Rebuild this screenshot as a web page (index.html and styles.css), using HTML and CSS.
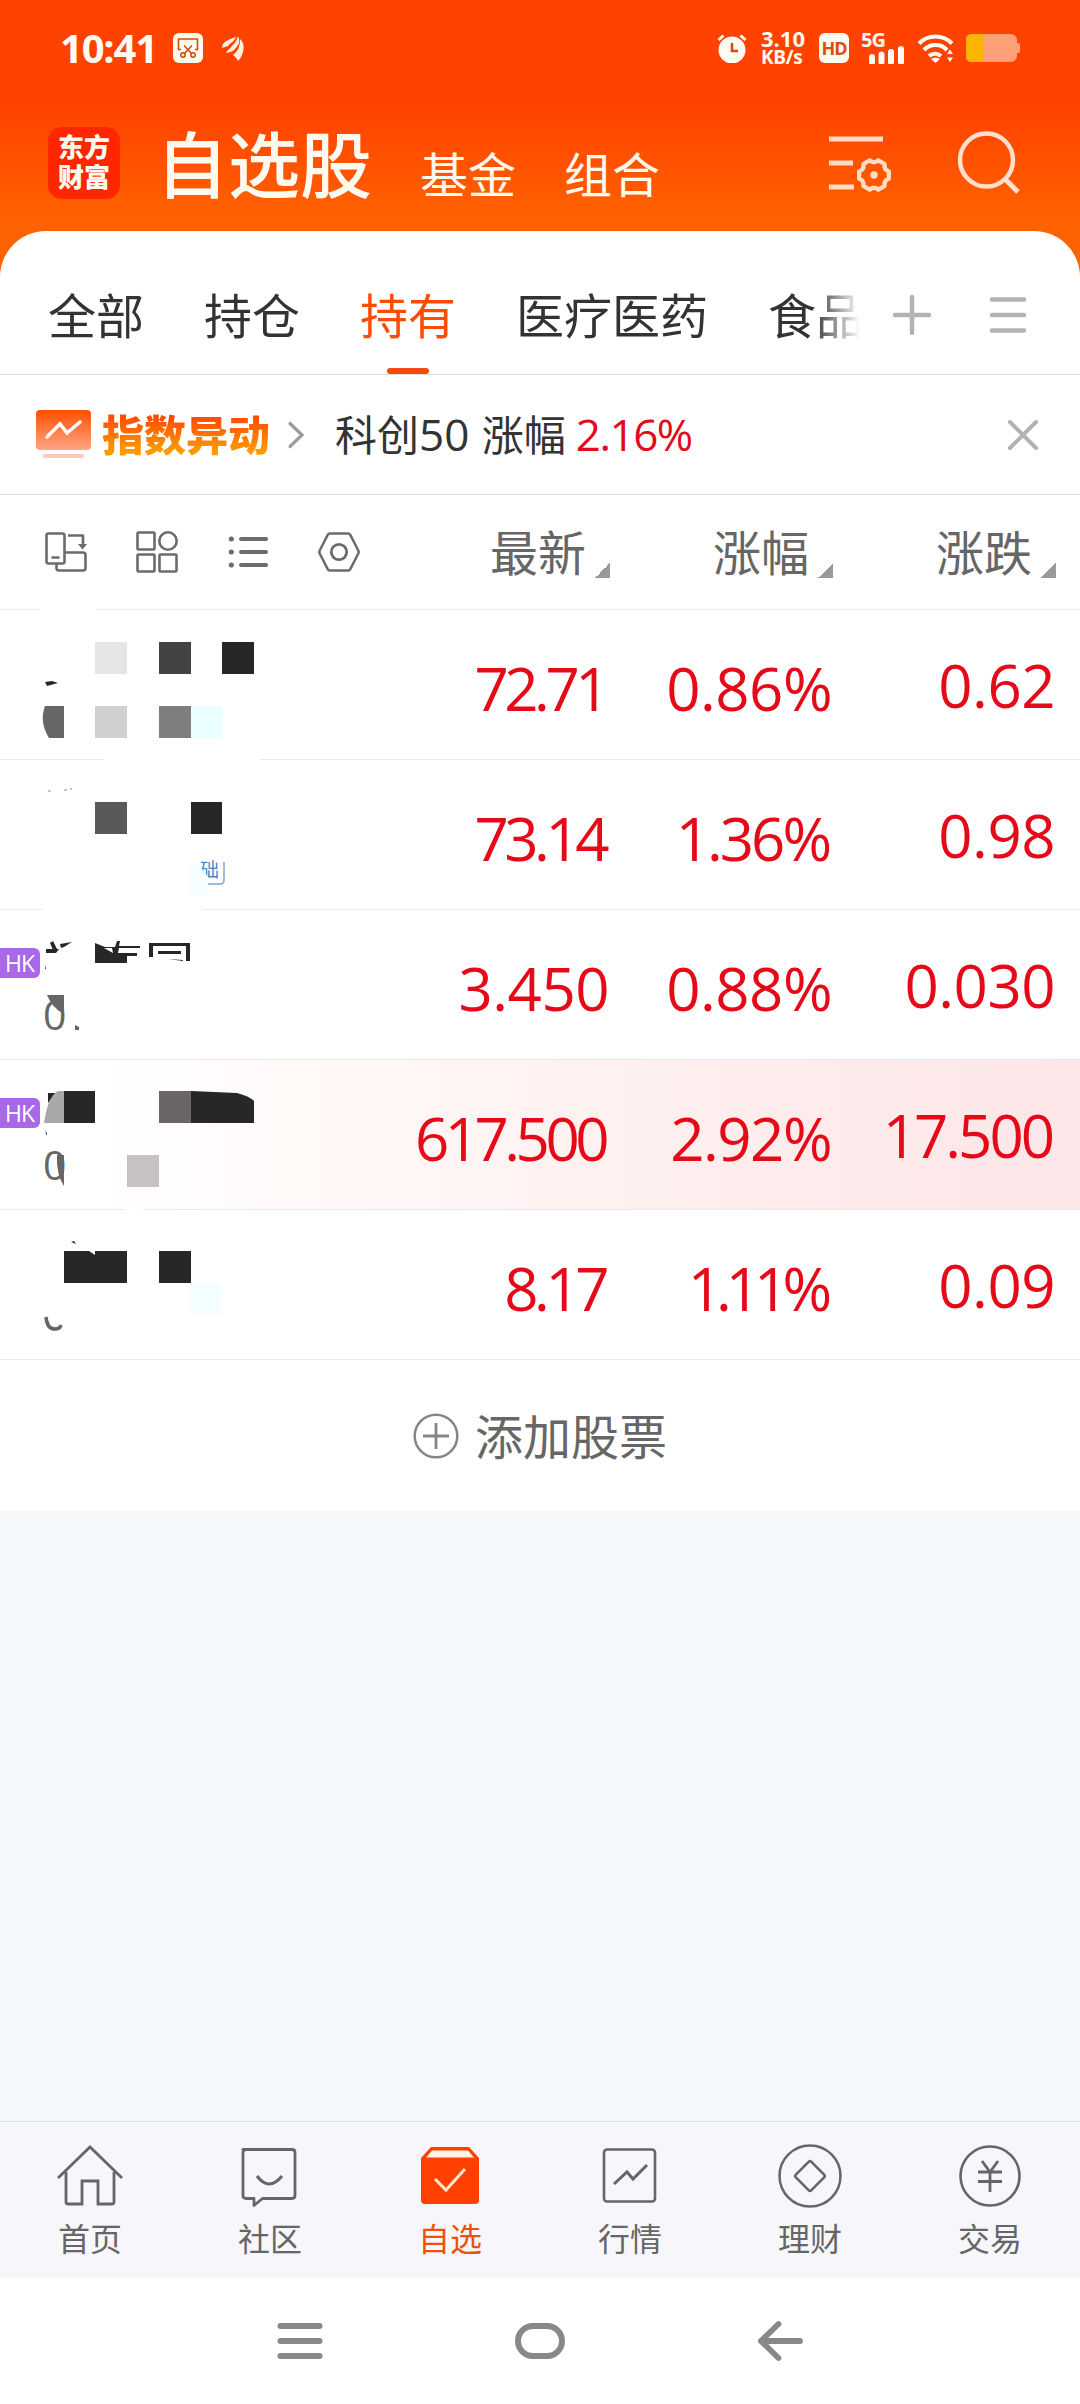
FILE: index.html
```html
<!DOCTYPE html>
<html lang="zh-CN">
<head>
    <meta charset="UTF-8">
    <meta name="viewport" content="width=device-width, initial-scale=1.0">
    <title>自选股</title>
    <link rel="stylesheet" href="styles.css">
</head>
<body>
    <div class="top">
        <div class="status">
            <span class="clock">10:41</span>
            <svg class="shot" width="30" height="30" viewBox="0 0 30 30">
                <rect width="30" height="30" rx="6" fill="#fff8ee"/>
                <path d="M8 16.500H5.500V6h19v10.500H22M11 12.500l8 8.500M19 12.500L11 21" fill="none" stroke="#c8500a" stroke-width="1.600"/>
                <circle cx="10" cy="22" r="2.200" fill="none" stroke="#c8500a" stroke-width="1.500"/>
                <circle cx="20" cy="22" r="2.200" fill="none" stroke="#c8500a" stroke-width="1.500"/>
            </svg>
            <svg width="24" height="28" viewBox="0 0 24 28">
                <g fill="#ffeedd">
                    <path d="M1 14C1 8 6 6 15 3c-2 5-6 6-8 9-2 1-4 1-6 2z"/>
                    <path d="M5 19c1-3 4-4 6-7 3-3 5-6 6-10 3 6 0 10-4 14-2 2-5 2-8 3z"/>
                    <path d="M12 21c4-3 7-7 7-16 5 4 4 11 2 16-1 3-3 5-4 6-1-3-3-4-5-6z"/>
                </g>
            </svg>
            <div class="status-right">
                <svg width="32" height="30" viewBox="0 0 32 30">
                    <circle cx="15" cy="17" r="13.500" fill="#fffaf2"/>
                    <path d="M1.500 7l5-4.500M28.500 7l-5-4.500" stroke="#fffaf2" stroke-width="3"/>
                    <path d="M15 10v8h6" fill="none" stroke="#d9480a" stroke-width="2.500"/>
                </svg>
                <div class="speed"><span>3.10</span><span>KB/s</span></div>
                <div class="hd">HD</div>
                <div class="signal">
                    <span>5G</span>
                    <svg width="36" height="18" viewBox="0 0 36 18">
                        <path d="M3 11v5M12.500 8.500V16M22 6v10M32 3v13" stroke="#fffaf2" stroke-width="6" stroke-linecap="round"/>
                    </svg>
                </div>
                <svg width="37" height="30" viewBox="0 0 37 30">
                    <path d="M2 10.500a23 23 0 0 1 33 0M7 17a16 16 0 0 1 23 0M12 23a9 9 0 0 1 12 0" fill="none" stroke="#fffaf2" stroke-width="4"/>
                    <path d="M14 26q4.500-3 9 0l-4.500 4zM30 21l3-4.500 3 4.500zM30 24.500h6L33 29z" fill="#fffaf2"/>
                </svg>
                <svg width="54" height="28" viewBox="0 0 54 28">
                    <rect width="51" height="28" rx="6" fill="#ffa076"/>
                    <path d="M51 9q3 0 3 2v6q0 2-3 2z" fill="#ffa076"/>
                    <path d="M18 0v28H6q-6 0-6-6V6q0-6 6-6z" fill="#fcb400"/>
                </svg>
            </div>
        </div>

        <div class="title-bar">
            <div class="logo">东方<br>财富</div>
            <h1>自选股</h1>
            <span class="sub">基金</span>
            <span class="sub">组合</span>
            <svg class="manage" width="66" height="64" viewBox="0 0 66 64">
                <path d="M1 9h54M1 33h24M1 57h25" stroke="#ffdcc4" stroke-width="5"/>
                <path d="M60.800 41.300V48.700Q55.500 50.500 56.600 56L50.200 59.700Q46 56 41.800 59.700L35.400 56Q36.500 50.500 31.200 48.700V41.300Q36.500 39.500 35.400 34L41.800 30.300Q46 34 50.200 30.300L56.600 34Q55.500 39.500 60.800 41.300z" fill="none" stroke="#ffdcc4" stroke-width="4.300" stroke-linejoin="round"/>
                <circle cx="46" cy="45" r="3.700" fill="#ffdcc4"/>
            </svg>
            <svg class="search" width="64" height="66" viewBox="0 0 64 66">
                <circle cx="30.500" cy="31" r="26.500" fill="none" stroke="#ffe0cc" stroke-width="4.500"/>
                <path d="M49 50l13 13" stroke="#ffe0cc" stroke-width="5"/>
            </svg>
        </div>

        <div class="tabs">
            <div class="tab-list">
                <span>全部</span>
                <span>持仓</span>
                <span class="active">持有</span>
                <span>医疗医药</span>
                <span>食品</span>
            </div>
            <svg class="add" width="40" height="40" viewBox="0 0 40 40">
                <path d="M3 20h34M20 2v36" stroke="#b2b2b2" stroke-width="4.500" stroke-linecap="round"/>
            </svg>
            <svg class="menu" width="38" height="40" viewBox="0 0 38 40">
                <path d="M3 4.500h32M3 20h32M3 35.500h32" stroke="#b2b2b2" stroke-width="4.500" stroke-linecap="round"/>
            </svg>
        </div>
    </div>

    <div class="notice">
        <svg class="notice-icon" width="55" height="50" viewBox="0 0 55 50">
            <defs>
                <linearGradient id="card" x1="0" y1="0" x2="0" y2="1">
                    <stop offset="0" stop-color="#ff4e00"/>
                    <stop offset="1" stop-color="#ffa585"/>
                </linearGradient>
            </defs>
            <rect width="55" height="40" rx="4" fill="url(#card)"/>
            <path d="M11 27l13-13 7 9 13-11" fill="none" stroke="#fff" stroke-width="3.500" stroke-linecap="round"/>
            <path d="M9 46h37" stroke="#fcc8ba" stroke-width="4" stroke-linecap="round"/>
        </svg>
        <b>指数异动</b>
        <svg class="chevron" width="18" height="30" viewBox="0 0 18 30">
            <path d="M3 3.500L15 15 3 26.500" fill="none" stroke="#9b9b9b" stroke-width="3.200" stroke-linecap="round"/>
        </svg>
        <span class="notice-text">科创<em>50</em> 涨幅</span>
        <span class="notice-rate">2.16%</span>
        <svg class="close" width="32" height="32" viewBox="0 0 32 32">
            <path d="M3 3l26 26M29 3L3 29" stroke="#b2b2b2" stroke-width="4" stroke-linecap="round"/>
        </svg>
    </div>

    <div class="row head">
        <div class="tools">
            <svg width="42" height="42" viewBox="0 0 42 42">
                <g fill="none" stroke="#6b6b6b" stroke-width="2.600" stroke-linejoin="round">
                    <rect x="1.500" y="2.500" width="18" height="30" rx="2"/>
                    <path d="M11.500 33v4q0 2.500 2.500 2.500h24q2.500 0 2.500-2.500V24q0-2.500-2.500-2.500H20M6.500 26.500h8M23 4.500h15v9"/>
                </g>
                <path d="M33 13h9l-4.500 5.500z" fill="#6b6b6b"/>
            </svg>
            <svg width="42" height="42" viewBox="0 0 42 42">
                <g fill="none" stroke="#6b6b6b" stroke-width="2.600">
                    <rect x="1.500" y="1.500" width="17" height="17" rx="1"/>
                    <circle cx="32" cy="10" r="8.700"/>
                    <rect x="1.500" y="23.500" width="17" height="17" rx="1"/>
                    <rect x="23.500" y="23.500" width="17" height="17" rx="1"/>
                </g>
            </svg>
            <svg width="42" height="42" viewBox="0 0 42 42">
                <path d="M14 8h25M14 21h25M14 34h25" stroke="#6b6b6b" stroke-width="4" stroke-linecap="round"/>
                <path d="M4.300 8h.1M4.300 21h.1M4.300 34h.1" stroke="#6b6b6b" stroke-width="5" stroke-linecap="round"/>
            </svg>
            <svg width="42" height="42" viewBox="0 0 42 42">
                <path d="M12 2.500h18q1.500 0 2.300 1.400l8 15.600q.8 1.500 0 3l-8 15.600q-.8 1.400-2.300 1.400H12q-1.500 0-2.300-1.400l-8-15.600q-.8-1.500 0-3l8-15.600Q10.500 2.500 12 2.500z" fill="none" stroke="#6b6b6b" stroke-width="2.500"/>
                <circle cx="21" cy="21" r="7.700" fill="none" stroke="#6b6b6b" stroke-width="2.800"/>
            </svg>
        </div>
        <div class="col">最新<i></i></div>
        <div class="col">涨幅<i></i></div>
        <div class="col">涨跌<i></i></div>
    </div>

    <div class="row">
        <svg class="name" width="300" height="150" viewBox="0 0 300 150">
            <path d="M40-1h56v3H40zM104 148h156v4H104z" fill="#fff"/>
            <path d="M95 32h32v32H95z" fill="#e5e5e5"/>
            <path d="M159 32h32v32h-32z" fill="#434343"/>
            <path d="M222 32h32v32h-32z" fill="#272727"/>
            <path d="M45 72l7-1 6 2-11 3z" fill="#272727"/>
            <path d="M45 96h19v32H49q-10-16-4-32z" fill="#666"/>
            <path d="M95 96h32v32H95z" fill="#d0d0d0"/>
            <path d="M159 96h32v32h-32z" fill="#7e7e7e"/>
            <path d="M191 96h31v32h-31z" fill="#eaffff"/>
        </svg>
        <div class="num tight-4">72.71</div>
        <div class="num">0.86%</div>
        <div class="num">0.62</div>
    </div>

    <div class="row">
        <svg class="name" width="300" height="150" viewBox="0 0 300 150">
            <defs>
                <clipPath id="chip"><path d="M197 98h30v29h-19v-10l-11-15z"/></clipPath>
            </defs>
            <path d="M43 148h160v4H43z" fill="#fff"/>
            <path d="M48 31h3M64 30h3M70 29h2" stroke="#888"/>
            <path d="M95 42h32v32H95z" fill="#595959"/>
            <path d="M191 42h31v32h-31z" fill="#272727"/>
            <path d="M191 104h17v32h-17z" fill="#f5feff"/>
            <g clip-path="url(#chip)">
                <text x="200" y="117" class="chip-text">础</text>
            </g>
            <path d="M208 124h12q4 0 4-4v-18" fill="none" stroke="#7aa9cf" stroke-width="1.500"/>
        </svg>
        <div class="num tight-4">73.14</div>
        <div class="num tight-2">1.36%</div>
        <div class="num">0.98</div>
    </div>

    <div class="row">
        <svg class="name" width="300" height="150" viewBox="0 0 300 150">
            <g fill="#272727">
                <path d="M50 33l3-2 4 8-4 1zM60 34l12-2-8 5-3 1zM46 39h13l-3 4H46zM45 59l1-4v4z"/>
                <path d="M95 33l10 4h10l2-6h3l-1 5h21v2h-21l-1 5h19v3h-10v7H95z"/>
                <path d="M149 33h41v18h-4V36h-33v11h-4zM158 41h23v3h-23zM168 49l15 1v1z"/>
            </g>
            <path d="M104 38h8l1 5z" fill="#fff"/>
            <text x="43" y="120" class="code">0</text>
            <path d="M47 85h17v19q-12-6-17-19z" fill="#666"/>
            <path d="M75 115l4 2v3h-4z" fill="#666"/>
        </svg>
        <span class="badge">HK</span>
        <div class="num">3.450</div>
        <div class="num">0.88%</div>
        <div class="num">0.030</div>
    </div>

    <div class="row hot">
        <svg class="name" width="300" height="150" viewBox="0 0 300 150">
            <path d="M125 149h18v2h-18z" fill="#fff"/>
            <path d="M48 33h8l-8 10z" fill="#272727"/>
            <path d="M44 63q4-27 14-32h6v32z" fill="#a8a8a8"/>
            <path d="M64 31h31v32H64z" fill="#272727"/>
            <path d="M159 31h32v32h-32z" fill="#6b6567"/>
            <path d="M191 31l46 2q12 3 17 8v22h-63z" fill="#272727"/>
            <path d="M45 71l2 2v3z" fill="#333"/>
            <text x="43" y="120" class="code">0</text>
            <path d="M57 95h7v31q-8-12-7-31z" fill="#666"/>
            <path d="M127 95h32v32h-32z" fill="#c7c1c4"/>
        </svg>
        <span class="badge">HK</span>
        <div class="num tight-4">617.500</div>
        <div class="num tight-1">2.92%</div>
        <div class="num tight-3">17.500</div>
    </div>

    <div class="row">
        <svg class="name" width="300" height="150" viewBox="0 0 300 150">
            <path d="M71 32l3-1 2 3zM64 41h25l6 4v-4h32v32H64zM159 41h32v32h-32z" fill="#272727"/>
            <path d="M191 73h30v30h-30z" fill="#f3feff"/>
            <path d="M46 107q1 12 9 12 5 0 6-4" fill="none" stroke="#666" stroke-width="3.500"/>
        </svg>
        <div class="num tight-4">8.17</div>
        <div class="num tight-5">1.11%</div>
        <div class="num">0.09</div>
    </div>

    <div class="add-stock">
        <svg width="46" height="46" viewBox="0 0 46 46">
            <circle cx="23" cy="23" r="21.300" fill="none" stroke="#858585" stroke-width="2.500"/>
            <path d="M10 23h26M23 10v26" stroke="#858585" stroke-width="2.800"/>
        </svg>
        <span>添加股票</span>
    </div>

    <div class="blank"></div>

    <div class="nav">
        <div class="item">
            <svg width="66" height="66" viewBox="0 0 66 66">
                <path d="M1 35L33 4l32 31M9 29v30q0 2 2 2h14V38h16v23h14q2 0 2-2V29" fill="none" stroke="#666" stroke-width="2.800"/>
            </svg>
            <span>首页</span>
        </div>
        <div class="item">
            <svg width="66" height="66" viewBox="0 0 66 66">
                <path d="M7.500 6.500h49q3 0 3 3v43q0 3-3 3H27l-8.500 7v-7h-8q-3 0-3-3v-43q0-3 3-3z" transform="translate(-1.500 0)" fill="none" stroke="#666" stroke-width="2.800" stroke-linejoin="round"/>
                <path d="M20 33q12 16 25 0" fill="none" stroke="#666" stroke-width="3"/>
            </svg>
            <span>社区</span>
        </div>
        <div class="item on">
            <svg width="66" height="66" viewBox="0 0 66 66">
                <path d="M14 4h38l10 11v42q0 4-4 4H8q-4 0-4-4V15z" fill="#ff4000"/>
                <path d="M15 7.500h36l6 7H9z" fill="#fff1e8"/>
                <path d="M18 36l11 11 19-21" fill="none" stroke="#ffe6cc" stroke-width="3"/>
            </svg>
            <span>自选</span>
        </div>
        <div class="item">
            <svg width="66" height="66" viewBox="0 0 66 66">
                <rect x="7" y="6.500" width="51" height="52" rx="3" fill="none" stroke="#666" stroke-width="2.600"/>
                <path d="M17 41l13-12 6 7 14-14" fill="none" stroke="#666" stroke-width="3"/>
            </svg>
            <span>行情</span>
        </div>
        <div class="item">
            <svg width="66" height="66" viewBox="0 0 66 66">
                <circle cx="33" cy="33" r="30.500" fill="none" stroke="#666" stroke-width="2.500"/>
                <rect x="22" y="22" width="22" height="22" rx="2" transform="rotate(45 33 33)" fill="none" stroke="#666" stroke-width="2.600"/>
            </svg>
            <span>理财</span>
        </div>
        <div class="item">
            <svg width="66" height="66" viewBox="0 0 66 66">
                <circle cx="33" cy="33" r="29.500" fill="none" stroke="#666" stroke-width="2.600"/>
                <path d="M25 18l8 11 8-11M33 28v21M21 29h24M21 38.500h24" fill="none" stroke="#666" stroke-width="2.800"/>
            </svg>
            <span>交易</span>
        </div>
    </div>

    <div class="system">
        <svg width="46" height="42" viewBox="0 0 46 42">
            <path d="M3.500 6h39M3.500 21h39M3.500 36h39" stroke="#888" stroke-width="6" stroke-linecap="round"/>
        </svg>
        <svg width="52" height="42" viewBox="0 0 52 42">
            <rect x="4" y="6" width="44" height="30" rx="15" fill="none" stroke="#888" stroke-width="6"/>
        </svg>
        <svg width="46" height="42" viewBox="0 0 46 42">
            <path d="M21.500 4L4 21l17.500 17M4 21h39" fill="none" stroke="#888" stroke-width="5.800" stroke-linecap="round" stroke-linejoin="round"/>
        </svg>
    </div>
</body>
</html>
```
FILE: styles.css
```css
* {
    box-sizing: border-box;
}

body {
    margin: 0;
    width: 1080px;
    height: 2404px;
    display: flex;
    flex-direction: column;
    background: #fff;
    color: #333;
    font-family: "Noto Sans CJK SC", sans-serif;
    overflow: hidden;
}

svg {
    display: block;
    flex: none;
}

.top {
    background: linear-gradient(#ff4200 0, #ff4200 105px, #ff6200 220px, #ff6200 100%);
}

/* status bar */
.status {
    height: 96px;
    padding: 0 60px;
    display: flex;
    align-items: center;
    color: #fffaf2;
    font-family: "Open Sans", sans-serif;
}

.clock {
    width: 113px;
    font-size: 40px;
    font-weight: bold;
    letter-spacing: -1.2px;
    line-height: 1;
}

.shot {
    margin-right: 18px;
}

.status-right {
    display: flex;
    align-items: center;
    gap: 12px;
    margin-left: auto;
}

.speed {
    width: 46px;
    display: flex;
    flex-direction: column;
    font-size: 22px;
    font-weight: bold;
    line-height: 19px;
    white-space: nowrap;
}

.speed span:last-child {
    font-size: 19px;
    letter-spacing: -.3px;
}

.hd {
    width: 30px;
    height: 30px;
    border-radius: 6px;
    background: #fffaf2;
    color: #e04a0c;
    font-size: 18px;
    font-weight: bold;
    line-height: 30px;
    letter-spacing: -1px;
    text-align: center;
}

.signal {
    width: 44px;
    height: 32px;
    display: flex;
    flex-direction: column;
    align-items: flex-end;
}

.signal span {
    align-self: flex-start;
    height: 14px;
    font-size: 20px;
    font-weight: bold;
    line-height: 16px;
    letter-spacing: -1px;
}

/* title */
.title-bar {
    height: 135px;
    padding: 0 60px 0 48px;
    display: flex;
    align-items: flex-start;
    color: #fffaf0;
}

.logo {
    width: 72px;
    height: 72px;
    margin-top: 31px;
    padding-top: 4px;
    border-radius: 14px;
    background: #ff2600;
    font-size: 26px;
    font-weight: 900;
    line-height: 30px;
    text-align: center;
}

h1 {
    margin: 13px 48px 0 36px;
    font-size: 72px;
    font-weight: 500;
    line-height: 104px;
}

.sub {
    margin: 52px 48px 0 0;
    font-size: 48px;
    line-height: 48px;
}

.manage {
    margin: 34px 0 0 120px;
}

.search {
    margin: 33px 0 0 auto;
}

/* group tabs */
.tabs {
    height: 144px;
    display: flex;
    align-items: center;
    padding: 0 53px 0 48px;
    border-radius: 46px 46px 0 0;
    background: #fff;
    border-bottom: 1px solid #ddd;
}

.tab-list {
    width: 812px;
    height: 143px;
    display: flex;
    gap: 60px;
    overflow: hidden;
    white-space: nowrap;
    font-size: 48px;
    line-height: 165px;
    -webkit-mask-image: linear-gradient(90deg, #000 765px, transparent 812px);
    mask-image: linear-gradient(90deg, #000 765px, transparent 812px);
}

.tab-list span {
    flex: none;
}

.tab-list .active {
    height: 143px;
    color: #ff4a00;
    position: relative;
}

.active::after {
    content: "";
    position: absolute;
    left: 27px;
    bottom: 0;
    width: 42px;
    height: 6px;
    border-radius: 3px;
    background: #f04a0c;
}

.add {
    margin: 24px 0 0 32px;
}

.menu {
    margin: 24px 0 0 auto;
}

/* index notice */
.notice {
    height: 120px;
    padding: 0 41px 0 36px;
    display: flex;
    align-items: center;
    border-bottom: 1px solid #ddd;
    font-size: 42px;
    line-height: 60px;
}

.notice b {
    margin: -3px 0 0 11px;
    font-weight: 900;
    background: linear-gradient(#ff4e00 25%, #ff9a00 80%);
    -webkit-background-clip: text;
    background-clip: text;
    color: transparent;
}

.notice-text {
    margin-top: -3px;
    word-spacing: 3px;
}

.notice-text em {
    font-family: "Open Sans", sans-serif;
    font-size: 44px;
    font-style: normal;
    line-height: 1;
}

.chevron {
    margin: 0 30px 0 17px;
}

.notice-rate {
    margin: -2px 0 0 10px;
    color: #e30a1c;
    font-family: "Open Sans", sans-serif;
    font-size: 44px;
    font-weight: 500;
    letter-spacing: -1.5px;
}

.close {
    margin-left: auto;
}

/* quote list */
.row {
    height: 150px;
    display: grid;
    grid-template-columns: 310px 300px 223px 223px;
    align-items: center;
    position: relative;
    border-bottom: 1px solid #eaeaea;
}

.head {
    height: 115px;
}

.tools {
    display: flex;
    gap: 49px;
    padding-left: 45px;
}

.col {
    display: flex;
    align-items: flex-end;
    justify-content: flex-end;
    gap: 9px;
    margin-top: -5px;
    color: #666;
    font-size: 48px;
    line-height: 60px;
}

.col i {
    width: 15px;
    height: 15px;
    margin-bottom: 2px;
    background: linear-gradient(135deg, transparent 50%, #999 50%);
}

.name {
    overflow: visible;
}

.chip-text {
    font-size: 19px;
    fill: #3a8ac8;
}

.code {
    font-family: "Open Sans", sans-serif;
    font-size: 41px;
    font-weight: 500;
    fill: #666;
}

.badge {
    position: absolute;
    left: 0;
    top: 38px;
    width: 40px;
    height: 30px;
    padding-left: 5px;
    border-radius: 0 6px 6px 0;
    background: #a868e8;
    color: #fff;
    font-family: "Open Sans", sans-serif;
    font-size: 23px;
    line-height: 30px;
    letter-spacing: -1px;
}

.num {
    padding: 5px 1px 0 0;
    color: #e60a18;
    font-family: "Open Sans", sans-serif;
    font-size: 60px;
    font-weight: 500;
    line-height: 80px;
    text-align: right;
    letter-spacing: -.5px;
}

.num:last-child {
    padding-top: 0;
}

.tight-1 {
    padding-right: 2px;
    letter-spacing: -1.5px;
}

.tight-2 {
    padding-right: 4px;
    letter-spacing: -3px;
}

.tight-3 {
    padding-right: 4px;
    letter-spacing: -3px;
}

.tight-4 {
    padding-right: 5px;
    letter-spacing: -4.500px;
}

.tight-5 {
    padding-right: 7px;
    letter-spacing: -6px;
}

.hot {
    background: linear-gradient(90deg, #fff 90px, #fff9f8 300px, #fdeceb 800px, #fde6e8);
}

.add-stock {
    height: 151px;
    display: flex;
    align-items: center;
    justify-content: center;
    gap: 16px;
    color: #666;
    font-size: 48px;
    line-height: 60px;
}

.add-stock span {
    margin-top: -3px;
}

.blank {
    flex: 1;
    background: #f5f8fb;
}

/* bottom tabs */
.nav {
    height: 157px;
    display: grid;
    grid-template-columns: repeat(6, 180px);
    background: #f7f7fb;
    border-top: 1px solid #dfe0e4;
}

.item {
    display: flex;
    flex-direction: column;
    align-items: center;
    padding-top: 21px;
    color: #666;
    font-size: 32px;
    line-height: 57px;
}

.on {
    color: #f0500f;
}

/* system keys */
.system {
    height: 126px;
    display: flex;
    align-items: center;
    justify-content: center;
    gap: 191px;
}
```
